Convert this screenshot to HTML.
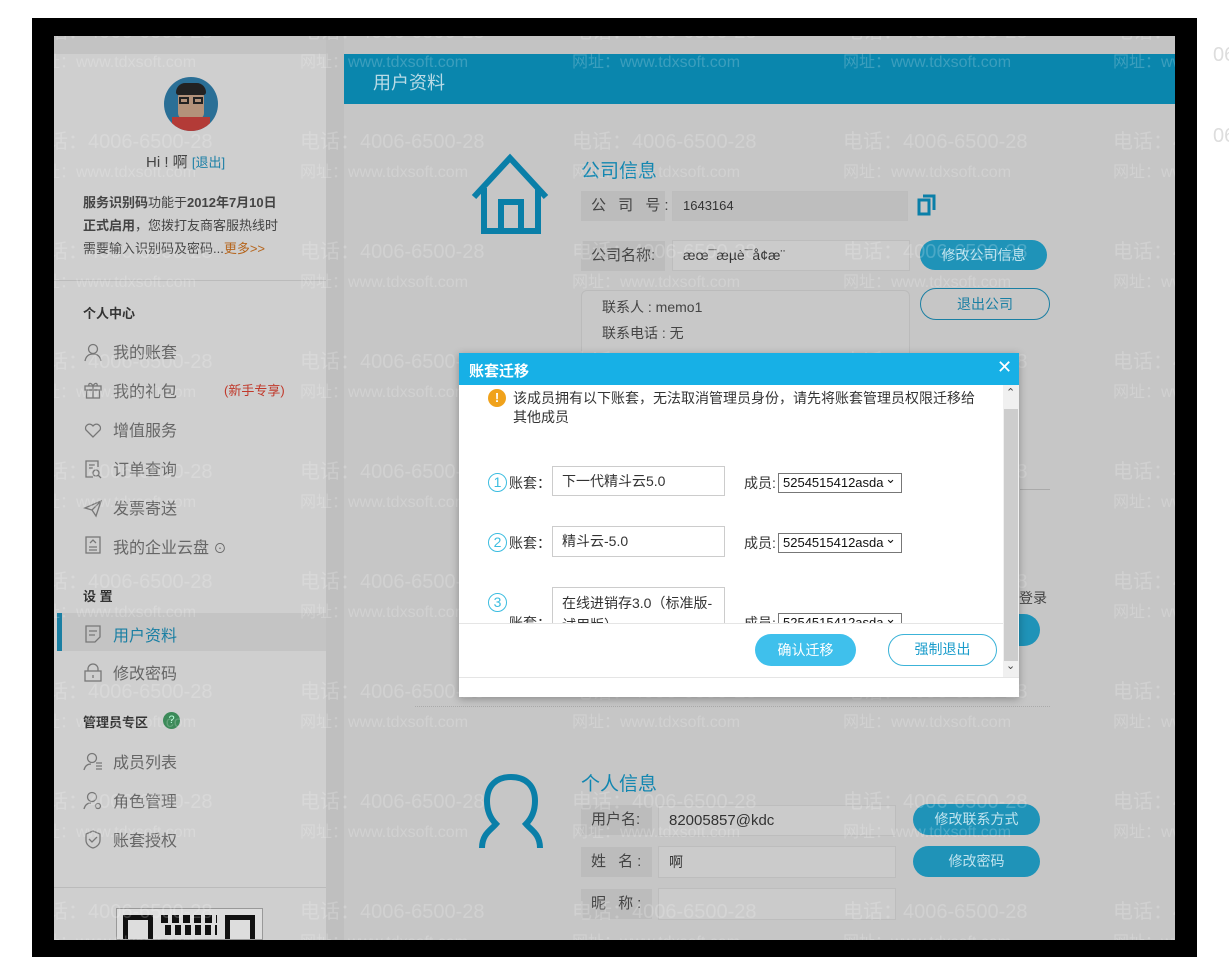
<!DOCTYPE html>
<html><head><meta charset="utf-8"><style>
*{margin:0;padding:0;box-sizing:border-box}
html,body{width:1229px;height:975px;overflow:hidden}
body{background:#fff;position:relative;font-family:"Liberation Sans","Noto Sans CJK SC",sans-serif;font-size:14px;color:#333}
.a{position:absolute}
.wm{position:absolute;font-size:20px;color:rgba(255,255,255,.2);white-space:nowrap}
.wm.s{font-size:16px}
.nav{position:absolute;left:83px;font-size:16px;color:#666}
.ic{position:absolute;left:83px;width:20px;height:20px}
.lbl{position:absolute;background:#bcbcbc;color:#444;font-size:15px;padding-left:10px;line-height:30px;white-space:nowrap}
.inp{position:absolute;border:1px solid #bdbdbd;background:#cbcbcb;color:#333;font-size:14px;padding-left:10px;white-space:nowrap}
.btn{position:absolute;border-radius:16px;background:#1f93b8;color:#bfe3ee;font-size:14px;text-align:center}
.mt{position:absolute;font-size:14px;color:#333}
.box{position:absolute;border:1px solid #ccc;background:#fff;font-size:14px;color:#333;padding-left:9px}
.sel{position:absolute;border:1px solid #777;background:#fff;font-size:13px;color:#111;padding-left:4px;line-height:18px;height:20px;width:124px}
.sel:after{content:"⌄";position:absolute;right:5px;top:-4px;font-size:13px}
.num{position:absolute;width:19px;height:19px;border:1.3px solid #3cbde0;border-radius:50%;color:#3cbde0;font-size:14px;text-align:center;line-height:17px}
</style></head><body>
<div class="a" style="left:32px;top:18px;width:1165px;height:939px;background:#000"></div>
<div class="a" style="left:54px;top:36px;width:272px;height:904px;background:#cfcfcf"></div>
<div class="a" style="left:54px;top:36px;width:1121px;height:18px;background:#c3c3c3"></div>
<div class="a" style="left:326px;top:36px;width:18px;height:904px;background:#bfbfbf"></div>
<div class="a" style="left:344px;top:54px;width:831px;height:886px;background:#c6c6c6"></div>
<div class="a" style="left:344px;top:54px;width:831px;height:50px;background:#0a86ad"></div>
<div class="a" style="left:373px;top:69px;font-size:18px;color:#b9dbe6">用户资料</div>

<div class="a" style="left:164px;top:77px;width:54px;height:54px;border-radius:50%;background:#2a6f96;overflow:hidden">
 <div class="a" style="left:14px;top:14px;width:26px;height:28px;background:#b3927a;border-radius:6px"></div>
 <div class="a" style="left:12px;top:6px;width:30px;height:12px;background:#222;border-radius:10px 10px 3px 3px"></div>
 <div class="a" style="left:8px;top:40px;width:38px;height:16px;background:#b33b37"></div>
 <div class="a" style="left:15px;top:20px;width:10px;height:7px;border:2px solid #222"></div>
 <div class="a" style="left:29px;top:20px;width:10px;height:7px;border:2px solid #222"></div>
</div>
<div class="a" style="left:146px;top:151px;font-size:15px;color:#444">Hi ! 啊 <span style="color:#1b7fa6;font-size:13px">[退出]</span></div>
<div class="a" style="left:83px;top:191px;width:240px;font-size:13px;line-height:23px;color:#444;white-space:nowrap"><b>服务识别码</b>功能于<b>2012年7月10日</b><br><b>正式启用</b>，您拨打友商客服热线时<br>需要输入识别码及密码...<span style="color:#b5651d">更多&gt;&gt;</span></div>
<div class="a" style="left:54px;top:280px;width:272px;height:1px;background:#bbb"></div>
<div class="a" style="left:83px;top:303px;font-size:13px;font-weight:bold;color:#333">个人中心</div>
<svg class="ic" style="top:342px" viewBox="0 0 20 20" fill="none" stroke="#777" stroke-width="1.3"><circle cx="10" cy="7" r="4.5"/><path d="M2 19c1-5 4-7 8-7s7 2 8 7"/></svg>
<div class="nav" style="left:113px;top:339px">我的账套</div>
<svg class="ic" style="top:380px" viewBox="0 0 20 20" fill="none" stroke="#777" stroke-width="1.3"><rect x="2" y="6" width="16" height="4"/><rect x="3.5" y="10" width="13" height="8"/><path d="M10 6v12M10 6C8 2 5 3 6 6M10 6c2-4 5-3 4 0"/></svg>
<div class="nav" style="left:113px;top:378px">我的礼包</div>
<div class="a" style="left:224px;top:380px;font-size:13px;color:#c0392b">(新手专享)</div>
<svg class="ic" style="top:420px" viewBox="0 0 20 20" fill="none" stroke="#777" stroke-width="1.3"><path d="M10 17L3 10a4 4 0 016-5l1 1 1-1a4 4 0 016 5z"/></svg>
<div class="nav" style="left:113px;top:417px">增值服务</div>
<svg class="ic" style="top:459px" viewBox="0 0 20 20" fill="none" stroke="#777" stroke-width="1.3"><path d="M15 8V2H3v16h7"/><circle cx="13" cy="14" r="3"/><path d="M15 16l3 3M6 6h6M6 9h4"/></svg>
<div class="nav" style="left:113px;top:456px">订单查询</div>
<svg class="ic" style="top:498px" viewBox="0 0 20 20" fill="none" stroke="#777" stroke-width="1.3"><path d="M2 10l16-7-5 15-4-6zM9 12l9-9"/></svg>
<div class="nav" style="left:113px;top:495px">发票寄送</div>
<svg class="ic" style="top:535px" viewBox="0 0 20 20" fill="none" stroke="#777" stroke-width="1.3"><rect x="3" y="2" width="14" height="16"/><path d="M6 12h8M6 15h8M7 8l3-3 3 3"/></svg>
<div class="nav" style="left:113px;top:534px">我的企业云盘 <span style="font-size:13px">⊙</span></div>
<div class="a" style="left:83px;top:586px;font-size:13px;font-weight:bold;color:#333">设 置</div>
<div class="a" style="left:57px;top:613px;width:269px;height:38px;background:#c4c4c4"></div>
<div class="a" style="left:57px;top:613px;width:5px;height:38px;background:#1a7fa3"></div>
<svg class="ic" style="top:624px" viewBox="0 0 20 20" fill="none" stroke="#777" stroke-width="1.3"><path d="M3 2h14v11l-5 5H3zM6 7h8M6 11h6"/></svg>
<div class="nav" style="left:113px;top:622px;color:#1a7fa3">用户资料</div>
<svg class="ic" style="top:662px" viewBox="0 0 20 20" fill="none" stroke="#777" stroke-width="1.3"><path d="M5 9V7a5 5 0 0110 0v2"/><rect x="2" y="9" width="16" height="10"/><path d="M10 13v3"/></svg>
<div class="nav" style="left:113px;top:660px">修改密码</div>
<div class="a" style="left:83px;top:712px;font-size:13px;font-weight:bold;color:#333">管理员专区</div>
<div class="a" style="left:163px;top:712px;width:17px;height:17px;border-radius:50%;background:#3c8a59;color:#bfd;font-size:11px;text-align:center;line-height:17px">?</div>
<svg class="ic" style="top:751px" viewBox="0 0 20 20" fill="none" stroke="#777" stroke-width="1.3"><circle cx="9" cy="7" r="4.5"/><path d="M1 19c1-4 3-6 7-6M13 12h6M13 15h6M13 18h6"/></svg>
<div class="nav" style="left:113px;top:749px">成员列表</div>
<svg class="ic" style="top:790px" viewBox="0 0 20 20" fill="none" stroke="#777" stroke-width="1.3"><circle cx="9" cy="7" r="4.5"/><path d="M1 19c1-4 3-6 7-6"/><circle cx="15" cy="16" r="2.5"/></svg>
<div class="nav" style="left:113px;top:788px">角色管理</div>
<svg class="ic" style="top:829px" viewBox="0 0 20 20" fill="none" stroke="#777" stroke-width="1.3"><path d="M10 2l7 3v6c0 4-3 7-7 8-4-1-7-4-7-8V5z"/><path d="M6 10l3 3 5-5"/></svg>
<div class="nav" style="left:113px;top:827px">账套授权</div>
<div class="a" style="left:54px;top:887px;width:272px;height:1px;background:#bbb"></div>
<div class="a" style="left:116px;top:908px;width:147px;height:32px;background:#ddd;border:1px solid #999;overflow:hidden">
 <div class="a" style="left:6px;top:6px;width:30px;height:30px;border:5px solid #111"></div>
 <div class="a" style="left:108px;top:6px;width:30px;height:30px;border:5px solid #111"></div>
 <div class="a" style="left:44px;top:6px;width:56px;height:8px;background:repeating-linear-gradient(90deg,#111 0 7px,#ddd 7px 11px)"></div>
 <div class="a" style="left:44px;top:16px;width:56px;height:10px;background:repeating-linear-gradient(90deg,#ddd 0 4px,#111 4px 10px)"></div>
</div>

<svg class="a" style="left:470px;top:152px" width="82" height="82" viewBox="0 0 82 82" fill="none" stroke="#0a7fa8" stroke-width="6"><path d="M4 45L40 6l36 39"/><path d="M14 36v43h54V36"/><path d="M31 79V50h20v29"/></svg>
<div class="a" style="left:581px;top:156px;font-size:19px;color:#1286b0">公司信息</div>
<div class="lbl" style="left:581px;top:191px;width:84px;height:30px;letter-spacing:4px">公 司 号:</div>
<div class="inp" style="left:672px;top:191px;width:236px;height:30px;line-height:28px;background:#bebebe;font-size:13px">1643164</div>
<svg class="a" style="left:917px;top:194px" width="20" height="22" viewBox="0 0 20 22" fill="none" stroke="#0a7fa8" stroke-width="3"><rect x="2" y="6" width="10" height="14"/><path d="M6 2h11v14"/></svg>
<div class="lbl" style="left:581px;top:241px;width:84px;height:30px">公司名称:</div>
<div class="inp" style="left:672px;top:240px;width:238px;height:31px;line-height:29px">æœ¯æµè¯å¢æ¨</div>
<div class="btn" style="left:920px;top:240px;width:127px;height:30px;line-height:30px">修改公司信息</div>
<div class="a" style="left:581px;top:290px;width:329px;height:70px;border:1px solid #bbb;border-radius:6px;background:#c8c8c8"></div>
<div class="a" style="left:602px;top:297px;font-size:14px;color:#444">联系人 : memo1</div>
<div class="a" style="left:602px;top:323px;font-size:14px;color:#444">联系电话 : 无</div>
<div class="btn" style="left:920px;top:288px;width:130px;height:32px;line-height:30px;background:transparent;border:1.5px solid #1a7fa3;color:#1a7fa3">退出公司</div>
<div class="a" style="left:1019px;top:588px;font-size:14px;color:#444">登录</div>
<div class="a" style="left:1010px;top:614px;width:30px;height:32px;border-radius:0 16px 16px 0;background:#1f93b8"></div>
<div class="a" style="left:415px;top:706px;width:635px;height:1px;border-top:1px dotted #aaa"></div>
<div class="a" style="left:1020px;top:489px;width:30px;height:1px;background:#aaa"></div>

<svg class="a" style="left:478px;top:773px" width="66" height="78" viewBox="0 0 66 78" fill="none" stroke="#0a7fa8" stroke-width="6"><path d="M4 75c0-14 9-18 14-24-6-6-9-14-9-23C9 12 19 4 33 4s24 8 24 24c0 9-3 17-9 23 5 6 14 10 14 24"/></svg>
<div class="a" style="left:581px;top:769px;font-size:19px;color:#1286b0">个人信息</div>
<div class="lbl" style="left:581px;top:805px;width:71px;height:30px">用户名:</div>
<div class="inp" style="left:658px;top:805px;width:238px;height:31px;line-height:29px;font-size:15px">82005857@kdc</div>
<div class="btn" style="left:913px;top:804px;width:127px;height:31px;line-height:31px">修改联系方式</div>
<div class="lbl" style="left:581px;top:847px;width:71px;height:30px;letter-spacing:4px">姓 名:</div>
<div class="inp" style="left:658px;top:846px;width:238px;height:32px;line-height:30px">啊</div>
<div class="btn" style="left:913px;top:846px;width:127px;height:31px;line-height:31px">修改密码</div>
<div class="lbl" style="left:581px;top:889px;width:71px;height:30px;letter-spacing:4px">昵 称:</div>
<div class="inp" style="left:658px;top:888px;width:238px;height:32px"></div>

<div class="a" style="left:54px;top:36px;width:1121px;height:904px;overflow:hidden">
<div id="wmw"></div>
</div>
<script>
(function(){var h='';var cols=[-26,246,518,789,1059];for(var r=-1;r<8;r++){var y=-28+r*110;for(var c=0;c<cols.length;c++){var x=cols[c];h+='<div class="wm" style="left:'+x+'px;top:'+(y+117)+'px">电话：4006-6500-28</div><div class="wm s" style="left:'+x+'px;top:'+(y+150)+'px">网址：www.tdxsoft.com</div>';}}document.getElementById('wmw').innerHTML=h;})();
</script>

<div class="a" style="left:459px;top:353px;width:560px;height:344px;background:#fff;box-shadow:0 2px 8px rgba(0,0,0,.3)">
 <div class="a" style="left:0;top:0;width:560px;height:32px;background:#17b0e6"></div>
 <div class="a" style="left:10px;top:7px;font-size:15px;font-weight:bold;color:#fff">账套迁移</div>
 <div class="a" style="left:538px;top:4px;font-size:18px;color:#fff">✕</div>
 <div class="a" style="left:544px;top:32px;width:16px;height:292px;background:#f0f0f0"></div>
 <div class="a" style="left:545px;top:56px;width:14px;height:252px;background:#cdcdcd"></div>
 <div class="a" style="left:547px;top:33px;font-size:11px;color:#444">⌃</div>
 <div class="a" style="left:547px;top:306px;font-size:11px;color:#444">⌄</div>
 <div class="a" style="left:29px;top:36px;width:18px;height:18px;border-radius:50%;background:#f0a21b;color:#fff;font-size:13px;text-align:center;line-height:18px;font-weight:bold">!</div>
 <div class="a" style="left:54px;top:36px;width:470px;font-size:14px;line-height:19px;color:#333">该成员拥有以下账套，无法取消管理员身份，请先将账套管理员权限迁移给<br>其他成员</div>
 <div class="num" style="left:29px;top:120px">1</div>
 <div class="mt" style="left:50px;top:120px">账套：</div>
 <div class="box" style="left:93px;top:113px;width:173px;height:30px;line-height:28px">下一代精斗云5.0</div>
 <div class="mt" style="left:285px;top:120px">成员:</div>
 <div class="sel" style="left:319px;top:120px">5254515412asda</div>
 <div class="num" style="left:29px;top:180px">2</div>
 <div class="mt" style="left:50px;top:180px">账套：</div>
 <div class="box" style="left:93px;top:173px;width:173px;height:31px;line-height:29px">精斗云-5.0</div>
 <div class="mt" style="left:285px;top:180px">成员:</div>
 <div class="sel" style="left:319px;top:180px">5254515412asda</div>
 <div class="a" style="left:0;top:230px;width:544px;height:40px;overflow:hidden">
  <div class="num" style="left:29px;top:10px">3</div>
  <div class="mt" style="left:50px;top:30px">账套：</div>
  <div class="box" style="left:93px;top:4px;width:173px;height:50px;line-height:22px;padding-top:4px">在线进销存3.0（标准版-试用版）</div>
  <div class="mt" style="left:285px;top:30px">成员:</div>
  <div class="sel" style="left:319px;top:30px">5254515412asda</div>
 </div>
 <div class="a" style="left:0;top:270px;width:544px;height:1px;background:#e5e5e5"></div>
 <div class="a" style="left:296px;top:281px;width:101px;height:32px;border-radius:16px;background:#3fc0ec;color:#fff;font-size:14px;text-align:center;line-height:32px">确认迁移</div>
 <div class="a" style="left:429px;top:281px;width:109px;height:32px;border-radius:16px;border:1.5px solid #3cb3d8;color:#1a9ccb;font-size:14px;text-align:center;line-height:29px">强制退出</div>
 <div class="a" style="left:0;top:324px;width:560px;height:1px;background:#e5e5e5"></div>
</div>

<div class="a" style="left:1213px;top:44px;font-size:20px;color:#ddd">06-</div>
<div class="a" style="left:1213px;top:125px;font-size:20px;color:#ddd">06-</div>
</body></html>
